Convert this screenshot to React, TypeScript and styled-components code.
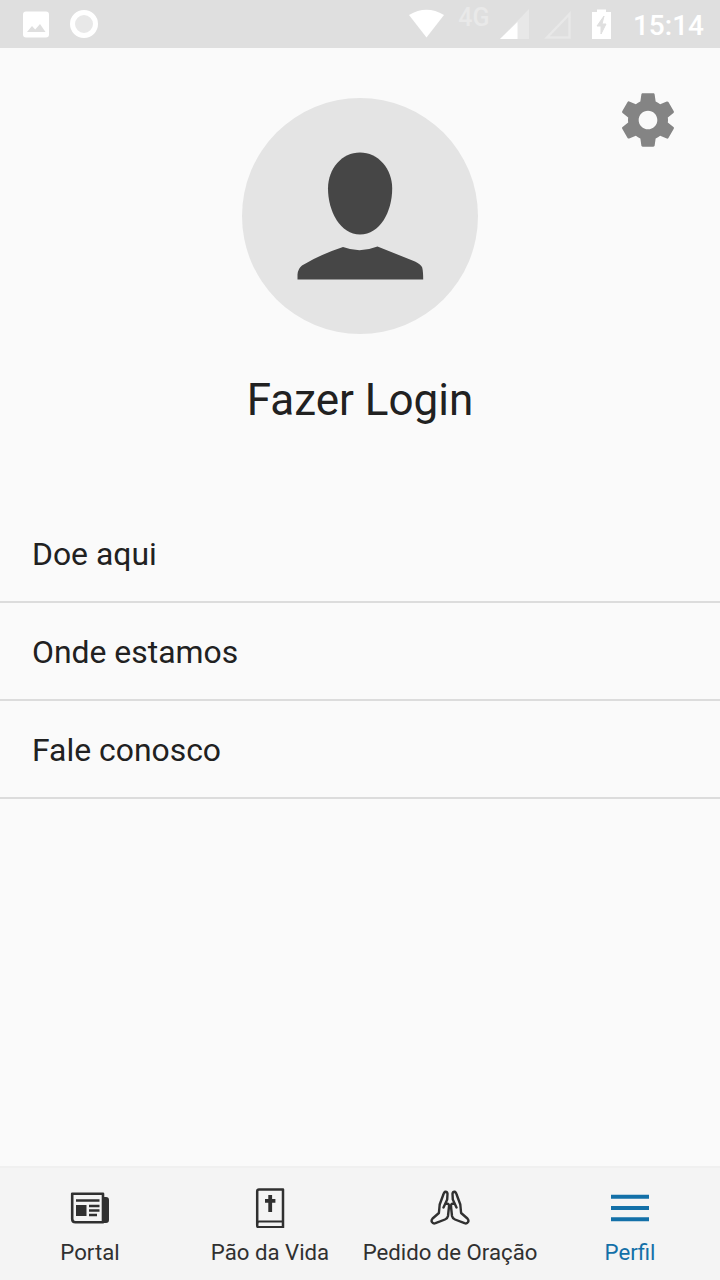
import React from "react";
import styled, { createGlobalStyle } from "styled-components";

const GlobalStyle = createGlobalStyle`
  * { box-sizing: border-box; }
  body { margin: 0; background: #fafafa; font-family: Roboto, "Liberation Sans", sans-serif; }
  svg { display: block; flex: none; }
`;

const Screen = styled.div`
  display: flex;
  flex-direction: column;
  width: 720px;
  height: 1280px;
  overflow: hidden;
  background: #fafafa;
  color: #212121;
`;

const StatusBar = styled.header`
  display: flex;
  justify-content: space-between;
  height: 48px;
  padding: 0 16px 0 20px;
  background: #dfdfdf;
`;

const StatusGroup = styled.div`
  display: flex;
  align-items: center;
`;

const NetworkLabel = styled.span`
  margin: 0 11px 12px 13px;
  font-size: 25px;
  line-height: 24px;
  font-weight: 500;
  color: #e9e9e9;
`;

const Clock = styled.time`
  margin-left: 10.5px;
  font-size: 28px;
  line-height: 32px;
  font-weight: 500;
  padding-top: 3px;
  color: #fff;
`;

const Profile = styled.section`
  display: grid;
  grid-template-columns: 1fr 236px 1fr;
  justify-items: end;
  padding: 49.5px 40px 0;
  height: 457px;
  grid-template-rows: 237px auto;
`;

const Avatar = styled.div`
  grid-column: 2;
  width: 236px;
  height: 236px;
  border-radius: 50%;
  background: #e4e4e4;
`;

const SettingsButton = styled.button`
  grid-column: 3;
  width: 64px;
  height: 64px;
  margin: -9.5px 0 0;
  padding: 0;
  border: 0;
  background: none;
  color: #848484;
`;

const LoginTitle = styled.h1`
  grid-column: 1 / -1;
  justify-self: center;
  margin: 39.5px 0 0;
  font-size: 44px;
  line-height: 52px;
  font-weight: 400;
`;

const Menu = styled.nav`
  flex: 1;
`;

const MenuItem = styled.a`
  display: flex;
  align-items: center;
  height: 98px;
  padding: 1px 32px 0;
  border-bottom: 2px solid #dcdcdc;
  font-size: 31.9px;
`;

const TabBar = styled.nav`
  display: grid;
  grid-template-columns: repeat(4, 1fr);
  height: 114px;
  border-top: 2px solid #f0f0f0;
  background: #f4f4f4;
`;

const Tab = styled.a<{ $active?: boolean }>`
  display: flex;
  flex-direction: column;
  align-items: center;
  padding-top: 20px;
  gap: 10px;
  color: ${(p) => (p.$active ? "#1370a8" : "#303030")};
  font-size: 22.2px;
  line-height: 28px;
  white-space: nowrap;
`;

const Person = () => (
  <svg width="236" height="236" viewBox="0 0 236 236" fill="#464646">
    <path d="M118 54.500C136 54.500 150.200 70.500 150.200 90.500C150.200 113.500 138 136.500 118 136.500C98.500 136.500 86 113.500 86 90.500C86 70.500 100 54.500 118 54.500Z" />
    <path d="M55.500 181.500V176.500Q56 170.500 60 167.500Q78 156.500 101 149Q118 155.500 135.500 148.500L173 163.500Q179 166.500 180.200 169.500Q181.200 173.500 181.200 181.500Z" />
  </svg>
);

const Gear = () => (
  <svg width="64" height="64" viewBox="0 0 24 24" fill="currentColor">
    <path d="M19.43 12.98c.04-.32.07-.64.07-.98s-.03-.66-.07-.98l2.110-1.650c.19-.15.24-.42.12-.64l-2-3.460c-.12-.22-.39-.3-.61-.22l-2.490 1c-.52-.4-1.080-.73-1.690-.98l-.38-2.650C14.460 2.180 14.250 2 14 2h-4c-.25 0-.46.18-.49.42l-.38 2.650c-.61.25-1.170.59-1.690.98l-2.490-1c-.23-.09-.49 0-.61.22l-2 3.460c-.13.22-.07.49.12.64l2.110 1.650c-.04.32-.07.65-.07.98s.03.66.07.98l-2.110 1.650c-.19.15-.24.42-.12.64l2 3.460c.12.22.39.3.61.22l2.490-1c.52.4 1.080.73 1.690.98l.38 2.650c.03.24.24.42.49.42h4c.25 0 .46-.18.49-.42l.38-2.650c.61-.25 1.170-.59 1.690-.98l2.490 1c.23.09.49 0 .61-.22l2-3.460c.12-.22.07-.49-.12-.64l-2.110-1.650zM12 15.500c-1.930 0-3.500-1.570-3.500-3.500s1.570-3.500 3.500-3.500 3.500 1.570 3.500 3.500-1.570 3.500-3.500 3.500z" />
  </svg>
);

const Newspaper = () => (
  <svg width="40" height="40" viewBox="0 0 40 40" fill="none" stroke="currentColor">
    <path d="M32 10H36Q38 10 38 12V32Q38 34 36 34H32Z" fill="currentColor" strokeWidth="2" />
    <path d="M2.200 5.800H33V34.200H5.500Q2.200 34.200 2.200 31Z" fill="#f4f4f4" strokeWidth="2.600" strokeLinejoin="round" />
    <path d="M6 12.500H29.500M19 18H29.500M19 22.500H29.500M19 27H27" strokeWidth="2.400" />
    <path d="M6 17H16.500V28H6Z" fill="currentColor" stroke="none" />
  </svg>
);

const Bible = () => (
  <svg width="40" height="40" viewBox="0 0 40 40" fill="none" stroke="currentColor">
    <path d="M9 1.500H33V39.300H9Q7.200 39.300 7.200 37.500V3.300Q7.200 1.500 9 1.500Z" strokeWidth="2.500" strokeLinejoin="round" />
    <path d="M7.200 35.500Q7.200 33.500 9 33.500H33" strokeWidth="2.200" />
    <path d="M20.200 7V24M15 12.800H25.400" strokeWidth="3.800" />
  </svg>
);

const HandPath = "M13.500 19.500L17.200 11.500L17.500 5.700Q17.200 3.700 15.500 3.800Q14 4 13.200 7L9.700 16.500L8.900 25L2.600 30.500Q1 32.300 1.900 34Q3 36 5.500 35.200L15 31.500Q17.500 30.500 18 28L19 18.500Q19.200 15.700 17.200 15.700H15.700";

const Hands = () => (
  <svg width="40" height="40" viewBox="0 0 40 40" fill="none" stroke="currentColor" strokeWidth="2.400" strokeLinejoin="round" strokeLinecap="round">
    <path d={HandPath} />
    <path d={HandPath} transform="matrix(-1 0 0 1 40 0)" />
  </svg>
);

const Bars = () => (
  <svg width="40" height="40" viewBox="0 0 40 40" fill="none" stroke="currentColor" strokeWidth="4">
    <path d="M1 8.800H39M1 20H39M1 31.200H39" />
  </svg>
);

export default function App() {
  return (
    <Screen>
      <GlobalStyle />
      <StatusBar>
        <StatusGroup>
          <svg width="80" height="48" viewBox="0 0 80 48">
            <rect x="3" y="11.500" width="26" height="26" rx="3" fill="#fff" />
            <path d="M7 32L12 26L15.200 29.500L20 24L25.500 32Z" fill="#dfdfdf" />
            <circle cx="64" cy="24" r="11.500" fill="#e8e8e8" stroke="#fff" strokeWidth="5" />
          </svg>
        </StatusGroup>
        <StatusGroup>
          <svg width="36" height="48" viewBox="0 0 36 48">
            <path d="M0 15Q17.500 4.500 35 15L17.500 37.500Z" fill="#fff" />
          </svg>
          <NetworkLabel>4G</NetworkLabel>
          <svg width="122" height="48" viewBox="0 0 122 48">
            <path d="M0 39L29 9V39Z" fill="#e8e8e8" />
            <path d="M0 39L17.500 22V39Z" fill="#fff" />
            <path d="M47 37.500L69.500 14V37.500Z" fill="none" stroke="#e8e8e8" strokeWidth="2.500" />
            <path d="M97 9.500H106V12H111V39H92V12H97Z" fill="#fff" />
            <path d="M104 16L97 26H101V34L106 24H102Z" fill="#dfdfdf" stroke="#dfdfdf" />
          </svg>
          <Clock>15:14</Clock>
        </StatusGroup>
      </StatusBar>
      <Profile>
        <Avatar><Person /></Avatar>
        <SettingsButton aria-label="Configurações"><Gear /></SettingsButton>
        <LoginTitle>Fazer Login</LoginTitle>
      </Profile>
      <Menu>
        <MenuItem>Doe aqui</MenuItem>
        <MenuItem>Onde estamos</MenuItem>
        <MenuItem>Fale conosco</MenuItem>
      </Menu>
      <TabBar>
        <Tab><Newspaper />Portal</Tab>
        <Tab><Bible />Pão da Vida</Tab>
        <Tab><Hands />Pedido de Oração</Tab>
        <Tab $active><Bars />Perfil</Tab>
      </TabBar>
    </Screen>
  );
}
